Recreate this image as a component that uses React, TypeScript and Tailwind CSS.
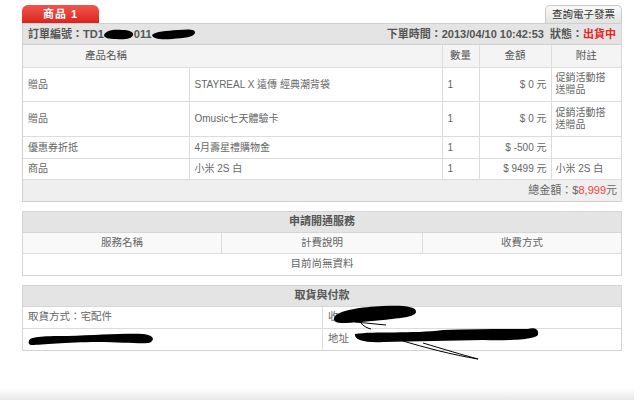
const FONT = { fontFamily: '"Liberation Sans", "Noto Sans CJK TC", sans-serif' }

function Blob({ w, h, d }: { w: number; h: number; d: string }) {
  return (
    <svg width={w} height={h} viewBox={`0 0 ${w} ${h}`} className="inline-block align-middle">
      <path d={d} fill="#000" />
    </svg>
  )
}

const cell = 'border-r border-b border-[#dcdcdc] px-[5px] align-middle'

const rows = [
  { type: '贈品', name: 'STAYREAL X 遠傳 經典潮背袋', qty: '1', price: '$ 0 元', note: ['促銷活動搭', '送贈品'], h: 'h-[34px]' },
  { type: '贈品', name: 'Omusic七天體驗卡', qty: '1', price: '$ 0 元', note: ['促銷活動搭', '送贈品'], h: 'h-[35px]' },
  { type: '優惠券折抵', name: '4月壽星禮購物金', qty: '1', price: '$ -500 元', note: [], h: 'h-[22px]' },
  { type: '商品', name: '小米 2S 白', qty: '1', price: '$ 9499 元', note: ['小米 2S 白'], h: 'h-[21px]' },
]

export default function App() {
  return (
    <div className="relative w-[640px] h-[405px] bg-white overflow-hidden text-[#666]" style={FONT}>
      <div className="ml-[22px] w-[600px]">
        {/* tabs */}
        <div className="flex justify-between items-end h-[23px]">
          <div className="w-[77px] h-[18px] rounded-t-[6px] bg-gradient-to-b from-[#f4534c] to-[#d9231d] text-white font-bold text-[11px] flex items-center justify-center tracking-[1px]">
            商品 1
          </div>
          <div className="w-[77px] h-[18px] rounded-t-[5px] border border-b-0 border-[#c8c8c8] bg-gradient-to-b from-[#fafafa] to-[#e2e2e2] text-[#333] text-[10.5px] flex items-center justify-center">
            查詢電子發票
          </div>
        </div>

        {/* order */}
        <div className="border border-[#cfcfcf] border-r-[#d8d8d8]">
          <div className="h-[21px] bg-[#e4e4e4] border-b border-[#d0d0d0] flex items-center justify-between px-[5px] text-[11px] font-bold text-[#555]">
            <div className="flex items-center">
              <span>訂單編號：TD1</span>
              <Blob w={30} h={12} d="M0 7 C2 2 10 1 18 2 C25 2 30 4 29 7 C28 11 20 12 12 11 C5 11 0 10 0 7 Z" />
              <span>011</span>
              <Blob w={44} h={12} d="M0 7 C4 3 14 3 26 2 C36 1 44 1 43 5 C42 9 32 10 20 11 C9 12 1 11 0 7 Z" />
            </div>
            <div>
              下單時間：2013/04/10 10:42:53 &nbsp;狀態：<span className="text-[#e8241e]">出貨中</span>
            </div>
          </div>
          <table className="w-full table-fixed border-collapse text-[10px]">
            <colgroup>
              <col className="w-[166px]" />
              <col className="w-[253px]" />
              <col className="w-[37px]" />
              <col className="w-[72px]" />
              <col />
            </colgroup>
            <thead>
              <tr className="h-[22px] bg-[#f4f4f4] text-[10.5px] text-[#555]">
                <th className="border-b border-[#dcdcdc] font-normal text-center">產品名稱</th>
                <th className="border-r border-b border-[#dcdcdc]"></th>
                <th className={`${cell} font-normal text-center`}>數量</th>
                <th className={`${cell} font-normal text-center`}>金額</th>
                <th className="border-b border-[#dcdcdc] font-normal text-center">附註</th>
              </tr>
            </thead>
            <tbody>
              {rows.map((r, i) => (
                <tr key={i} className={r.h}>
                  <td className={cell}>{r.type}</td>
                  <td className={cell}>{r.name}</td>
                  <td className={cell}>{r.qty}</td>
                  <td className={`${cell} text-right pr-[4px]`}>{r.price}</td>
                  <td className="border-b border-[#dcdcdc] px-[4px] leading-[12px]">
                    {r.note.map((n) => (
                      <div key={n}>{n}</div>
                    ))}
                  </td>
                </tr>
              ))}
            </tbody>
          </table>
          <div className="h-[21px] bg-[#efefef] flex items-center justify-end pr-[4px] text-[11px]">
            總金額：$<span className="text-[#f0443e]">8,999</span>元
          </div>
        </div>

        {/* service */}
        <div className="mt-[9px] border border-[#d4d4d4]">
          <div className="h-[21px] bg-[#e4e4e4] border-b border-[#d6d6d6] flex items-center justify-center text-[11px] font-bold text-[#555]">
            申請開通服務
          </div>
          <div className="grid grid-cols-[199px_201px_1fr] h-[21px] bg-[#f9f9f9] border-b border-[#dcdcdc] text-[10.5px]">
            <div className="border-r border-[#dcdcdc] flex items-center justify-center">服務名稱</div>
            <div className="border-r border-[#dcdcdc] flex items-center justify-center">計費說明</div>
            <div className="flex items-center justify-center">收費方式</div>
          </div>
          <div className="h-[21px] flex items-center justify-center text-[10.5px]">目前尚無資料</div>
        </div>

        {/* delivery */}
        <div className="mt-[9px] border border-[#d4d4d4]">
          <div className="h-[21px] bg-[#e4e4e4] border-b border-[#d6d6d6] flex items-center justify-center text-[11px] font-bold text-[#555]">
            取貨與付款
          </div>
          <div className="grid grid-cols-[300px_1fr] text-[10.5px]">
            <div className="h-[22px] border-r border-b border-[#dcdcdc] flex items-center px-[5px]">取貨方式：宅配件</div>
            <div className="relative h-[22px] border-b border-[#dcdcdc] flex items-center px-[5px]">
              收
              <svg width="90" height="30" viewBox="0 0 90 30" className="absolute left-[8px] top-[-3px]">
                <path d="M4 12 C10 6 30 3 52 2 C70 1 86 2 85 8 C84 13 70 14 52 16 C38 17 22 19 10 19 C4 19 1 16 4 12 Z" fill="#000" />
                <path d="M30 19 C32 22 36 24 40 25 M24 18 L55 21" stroke="#000" strokeWidth="1" fill="none" />
              </svg>
            </div>
            <div className="relative h-[21px] border-r border-[#dcdcdc] flex items-center px-[5px]">
              <svg width="130" height="14" viewBox="0 0 130 14" className="absolute left-[4px] top-[4px]">
                <path d="M2 8 C2 4 14 3 40 3 C70 2 100 0 116 1 C126 2 128 6 124 9 C120 12 100 9 70 9 C40 9 14 12 5 12 C2 12 1 10 2 8 Z" fill="#000" />
              </svg>
            </div>
            <div className="relative h-[21px] flex items-center px-[5px]">
              地址
              <svg width="200" height="40" viewBox="0 0 200 40" className="absolute left-[30px] top-[-2px]">
                <path d="M2 7 C20 4 60 7 90 3 C120 2 150 2 175 2 C182 0 186 3 185 7 C186 12 160 14 130 13 C100 14 60 14 30 15 C12 16 1 13 2 7 Z" fill="#000" />
                <path d="M50 14 C70 20 100 28 125 32 C110 28 90 22 70 16" stroke="#000" strokeWidth="1" fill="none" />
              </svg>
            </div>
          </div>
        </div>
      </div>

      <div className="absolute left-0 top-[388px] w-[634px] h-[12px] bg-gradient-to-b from-white to-[#e9e9e9]"></div>
    </div>
  )
}
